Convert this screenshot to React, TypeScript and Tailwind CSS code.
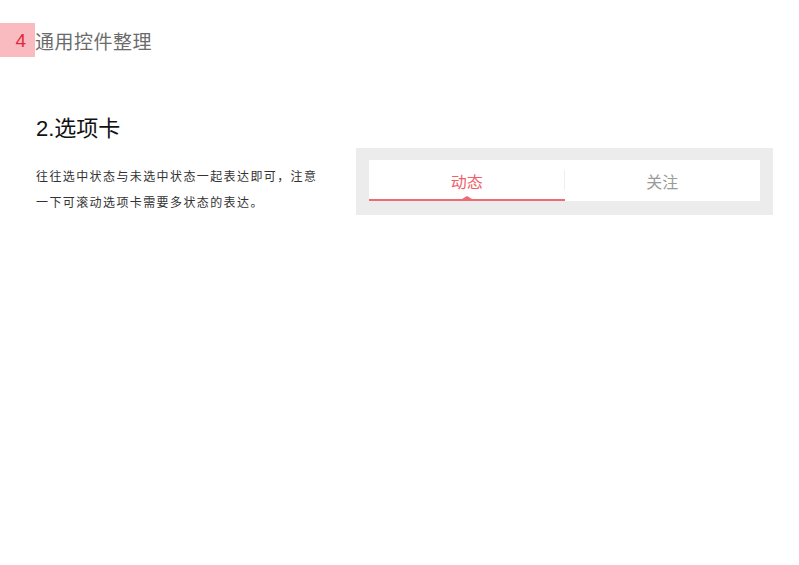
export default function App() {
  const font = { fontFamily: '"Noto Sans CJK SC", "Noto Sans", sans-serif' };

  return (
    <div className="w-[799px] h-[565px] bg-white overflow-hidden" style={font}>
      {/* section header */}
      <div className="flex items-center pt-[23px]">
        <div className="w-[35px] h-[34px] bg-[#f9bac0] flex items-center justify-end pr-[9px]">
          <span className="text-[19px] leading-none text-[#e3283c]" style={{ fontFamily: '"Liberation Sans", sans-serif' }}>
            4
          </span>
        </div>
        <span className="text-[19px] leading-none text-[#6b6b6b] tracking-[0.5px]">通用控件整理</span>
      </div>

      {/* body */}
      <div className="flex pl-[36px] pt-[56px]">
        <div className="w-[320px]">
          <h2 className="text-[22px] leading-[26px] text-[#111]">
            <span style={{ fontFamily: '"Liberation Sans", sans-serif' }}>2.</span>选项卡
          </h2>
          <p className="mt-[21px] text-[12px] leading-[26px] tracking-[1.4px] text-[#333]">
            往往选中状态与未选中状态一起表达即可，注意
            <br />
            一下可滚动选项卡需要多状态的表达。
          </p>
        </div>

        <div className="mt-[35px] w-[417px] h-[67px] bg-[#ececec] px-[13px] pt-[12px]">
          <div className="flex h-[41px] bg-white">
            <div className="relative flex-1 flex items-center justify-center">
              <span className="text-[16px] text-[#ef5f67]">动态</span>
              <div className="absolute left-0 right-0 bottom-0 h-[2px] bg-[#f06a72]" />
              <div className="absolute left-1/2 -translate-x-1/2 bottom-[2px] w-0 h-0 border-l-[5px] border-r-[5px] border-b-[3px] border-l-transparent border-r-transparent border-b-[#f06a72]" />
              <div className="absolute right-0 top-[10px] h-[20px] w-px bg-[#eeeeee]" />
            </div>
            <div className="flex-1 flex items-center justify-center">
              <span className="text-[16px] text-[#9a9a9a]">关注</span>
            </div>
          </div>
        </div>
      </div>
    </div>
  );
}
